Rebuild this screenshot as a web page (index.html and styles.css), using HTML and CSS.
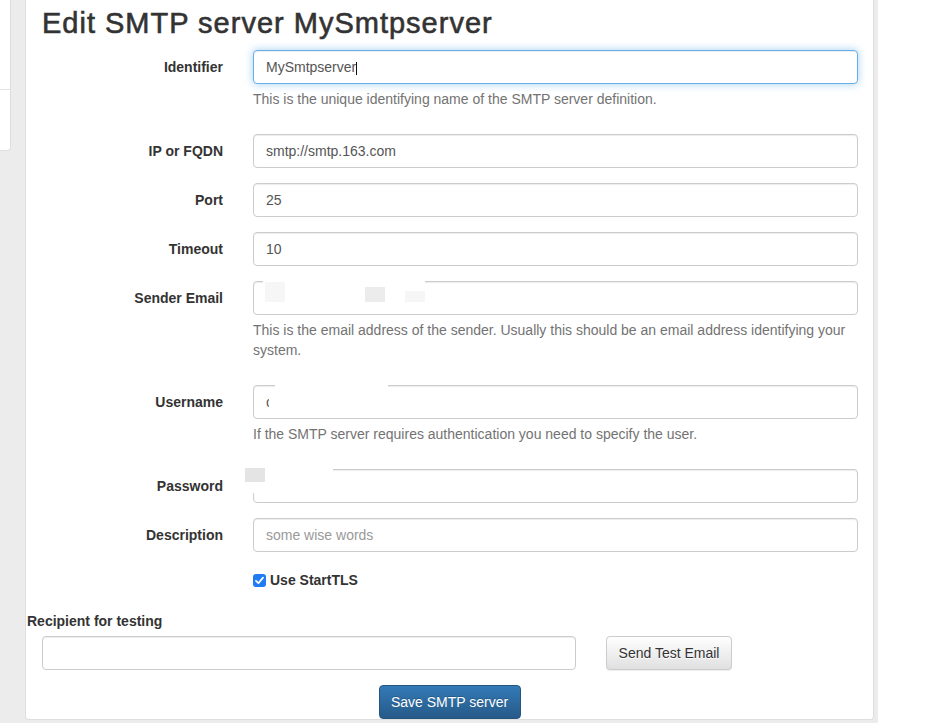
FILE: index.html
```html
<!DOCTYPE html>
<html lang="en">
<head>
<meta charset="utf-8">
<title>Edit SMTP server</title>
<link rel="stylesheet" href="styles.css">
</head>
<body>
<div class="page">
  <aside class="stub"><div class="stub-top"></div></aside>
  <main class="panel">
    <h2 class="title">Edit SMTP server MySmtpserver</h2>
    <form class="form">
      <div class="group">
        <label class="lbl">Identifier</label>
        <div class="ctl">
          <div class="field">
            <input class="inp focus" type="text" value="MySmtpserver">
            <span class="caret"></span>
          </div>
          <p class="help">This is the unique identifying name of the SMTP server definition.</p>
        </div>
      </div>
      <div class="group">
        <label class="lbl">IP or FQDN</label>
        <div class="ctl"><div class="field"><input class="inp" type="text" value="smtp://smtp.163.com"></div></div>
      </div>
      <div class="group">
        <label class="lbl">Port</label>
        <div class="ctl"><div class="field"><input class="inp" type="text" value="25"></div></div>
      </div>
      <div class="group">
        <label class="lbl">Timeout</label>
        <div class="ctl"><div class="field"><input class="inp" type="text" value="10"></div></div>
      </div>
      <div class="group">
        <label class="lbl">Sender Email</label>
        <div class="ctl">
          <div class="field">
            <input class="inp" type="text" value="">
            <span class="mask mask-sender-top"></span>
            <span class="mask blk blk-s1"></span>
            <span class="mask blk blk-s2"></span>
            <span class="mask blk blk-s3"></span>
          </div>
          <p class="help">This is the email address of the sender. Usually this should be an email address identifying your system.</p>
        </div>
      </div>
      <div class="group">
        <label class="lbl">Username</label>
        <div class="ctl">
          <div class="field">
            <input class="inp" type="text" value="c">
            <span class="mask mask-user-top"></span>
            <span class="mask mask-user-char"></span>
          </div>
          <p class="help">If the SMTP server requires authentication you need to specify the user.</p>
        </div>
      </div>
      <div class="group">
        <label class="lbl">Password</label>
        <div class="ctl">
          <div class="field">
            <input class="inp" type="password" value="">
            <span class="mask mask-pass"></span>
            <span class="mask blk blk-p1"></span>
          </div>
        </div>
      </div>
      <div class="group">
        <label class="lbl">Description</label>
        <div class="ctl"><div class="field"><input class="inp" type="text" placeholder="some wise words"></div></div>
      </div>
      <div class="check">
        <span class="cbox"><svg width="13" height="13" viewBox="0 0 13 13"><rect x="0" y="0" width="13" height="13" rx="3" fill="#1f7cf4"/><path d="M3 6.8 L5.4 9.2 L10 3.6" fill="none" stroke="#fff" stroke-width="1.8" stroke-linecap="round" stroke-linejoin="round"/></svg></span>
        <span>Use StartTLS</span>
      </div>
    </form>
    <div class="test">
      <label class="test-lbl">Recipient for testing</label>
      <div class="test-row">
        <input class="inp test-inp" type="text" value="">
        <button class="btn btn-default" type="button">Send Test Email</button>
      </div>
    </div>
    <div class="actions">
      <button class="btn btn-primary" type="button">Save SMTP server</button>
    </div>
  </main>
</div>
</body>
</html>
```

FILE: styles.css
```css
* { box-sizing: border-box; }
html, body { margin: 0; padding: 0; }
body {
  background: #fff;
  font-family: "Liberation Sans", Arial, sans-serif;
  font-size: 14px;
  line-height: 20px;
  color: #333;
  overflow: hidden;
}
.page {
  display: flex;
  align-items: flex-start;
  width: 878px;
  height: 723px;
  background: #ececec;
}
.stub {
  width: 11px;
  height: 151px;
  background: #fff;
  border-right: 1px solid #dedede;
  border-bottom: 1px solid #dedede;
  border-bottom-right-radius: 4px;
}
.stub-top {
  height: 90px;
  border-bottom: 1px solid #e3e3e3;
}
.panel {
  margin-left: 14px;
  width: 849px;
  background: #fff;
  border: 1px solid #dedede;
  border-top: 0;
  border-radius: 0 0 4px 4px;
  padding-top: 7px;
}
.title {
  margin: 0 0 10px;
  padding-left: 16px;
  font-size: 29px;
  line-height: 33px;
  font-weight: 400;
  letter-spacing: 1px;
  color: #333;
  -webkit-text-stroke: 0.6px #333;
}
.form { margin: 0; }
.group {
  display: grid;
  grid-template-columns: 212px 1fr;
  margin-bottom: 15px;
}
.lbl {
  padding: 7px 15px 0 15px;
  text-align: right;
  font-weight: 700;
}
.ctl { padding: 0 15px; }
.field { position: relative; }
.inp {
  display: block;
  width: 100%;
  height: 34px;
  padding: 6px 12px;
  font-family: "Liberation Sans", Arial, sans-serif;
  font-size: 14px;
  line-height: 20px;
  color: #555;
  background: #fff;
  border: 1px solid #ccc;
  border-radius: 4px;
  box-shadow: inset 0 1px 1px rgba(0, 0, 0, 0.075);
  outline: none;
  margin: 0;
}
.inp::placeholder { color: #999; }
.inp.focus {
  border-color: #66afe9;
  box-shadow: inset 0 1px 1px rgba(0, 0, 0, 0.075), 0 0 8px rgba(102, 175, 233, 0.6);
}
.caret {
  position: absolute;
  left: 103px;
  top: 12px;
  width: 1px;
  height: 13px;
  background: #111;
}
.help {
  margin: 5px 0 10px;
  color: #737373;
}
.mask { position: absolute; background: #fff; }
.blk { background: #f3f3f3; }
.mask-sender-top { left: 10px; top: -1px; width: 162px; height: 4px; }
.blk-s1 { left: 12px; top: 1px; width: 20px; height: 20px; background: #f6f6f6; }
.blk-s2 { left: 112px; top: 6px; width: 20px; height: 15px; background: #ececec; }
.blk-s3 { left: 152px; top: 10px; width: 20px; height: 11px; background: #f6f6f6; }
.mask-user-top { left: 22px; top: -1px; width: 113px; height: 4px; }
.mask-user-char { left: 16px; top: 8px; width: 10px; height: 18px; }
.mask-pass { left: -8px; top: -3px; width: 88px; height: 27px; }
.blk-p1 { left: -8px; top: -1px; width: 20px; height: 14px; background: #e4e4e4; }
.check {
  display: flex;
  align-items: center;
  padding: 3px 0 0 227px;
  height: 23px;
  font-weight: 700;
}
.cbox {
  display: inline-flex;
  width: 13px;
  height: 13px;
  margin-right: 4px;
}
.test { margin-top: 21px; }
.test-lbl {
  display: block;
  font-weight: 700;
  margin-bottom: 5px;
  padding-left: 1px;
}
.test-row {
  display: flex;
  gap: 30px;
  padding-left: 16px;
}
.test-inp { width: 534px; }
.btn {
  height: 34px;
  padding: 6px 0;
  border-radius: 4px;
  font-family: "Liberation Sans", Arial, sans-serif;
  font-size: 14px;
  line-height: 20px;
  text-align: center;
  cursor: pointer;
  margin: 0;
}
.btn-default {
  width: 126px;
  color: #333;
  border: 1px solid #ccc;
  background-image: linear-gradient(#ffffff, #e0e0e0);
  text-shadow: 0 1px 0 #fff;
  box-shadow: inset 0 1px 0 rgba(255, 255, 255, 0.15), 0 1px 1px rgba(0, 0, 0, 0.075);
}
.actions {
  display: flex;
  justify-content: center;
  margin-top: 15px;
}
.btn-primary {
  width: 142px;
  color: #fff;
  border: 1px solid #245580;
  background-image: linear-gradient(#337ab7, #265a88);
  text-shadow: 0 -1px 0 rgba(0, 0, 0, 0.2);
}
```
